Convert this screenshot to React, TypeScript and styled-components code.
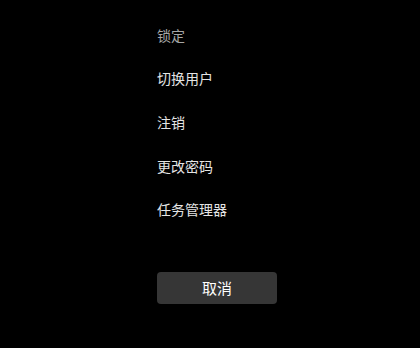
import styled, { createGlobalStyle } from "styled-components";

const GlobalStyle = createGlobalStyle`
  html, body {
    margin: 0;
    padding: 0;
    background: #000;
  }
  body {
    font-family: "Noto Sans CJK SC", "Noto Sans", sans-serif;
  }
`;

const Screen = styled.div`
  width: 420px;
  height: 348px;
  background: #000;
  display: flex;
  flex-direction: column;
  padding: 13px 0 0 157px;
  box-sizing: border-box;
`;

const Options = styled.ul`
  list-style: none;
  margin: 0;
  padding: 0;
  display: flex;
  flex-direction: column;
`;

const Option = styled.li<{ $dim?: boolean }>`
  height: 43.6px;
  display: flex;
  align-items: center;
  font-size: 14px;
  color: ${(p) => (p.$dim ? "#a6a6a6" : "#e4e4e4")};
  cursor: pointer;
`;

const CancelButton = styled.button`
  margin-top: 41px;
  width: 120px;
  height: 32px;
  border: none;
  border-radius: 4px;
  background: #363636;
  color: #fff;
  font-family: inherit;
  font-size: 15px;
  font-weight: 400;
  display: flex;
  align-items: center;
  justify-content: center;
  padding: 0;
  cursor: pointer;
`;

const options = ["锁定", "切换用户", "注销", "更改密码", "任务管理器"];

export default function App() {
  return (
    <>
      <GlobalStyle />
      <Screen>
        <Options>
          {options.map((label, i) => (
            <Option key={label} $dim={i === 0}>
              {label}
            </Option>
          ))}
        </Options>
        <CancelButton>取消</CancelButton>
      </Screen>
    </>
  );
}
